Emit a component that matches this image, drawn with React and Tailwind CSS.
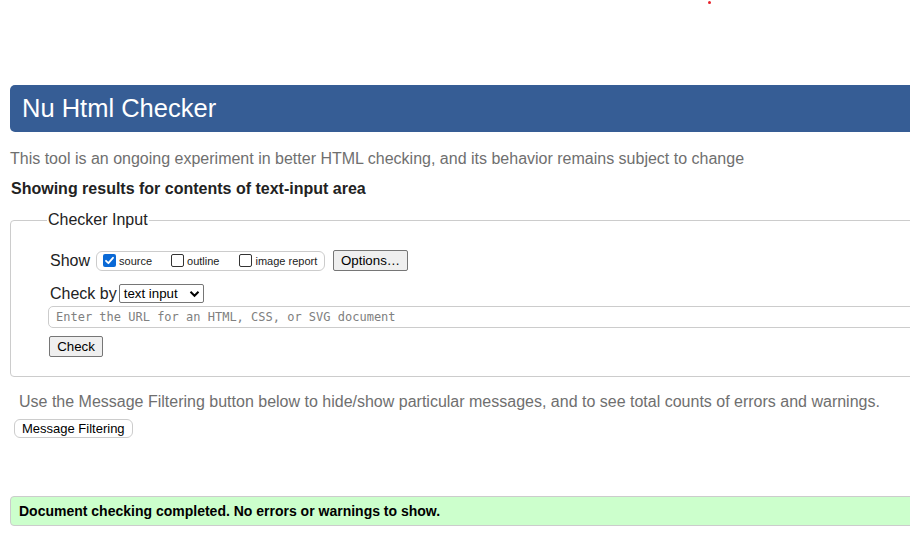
import React from "react";

export default function App() {
  return (
    <div className="relative w-[910px] h-[537px] overflow-hidden bg-white font-['Liberation_Sans',Arial,sans-serif] text-[#222]">
      <div className="absolute left-[708px] top-[1px] w-[3px] h-[3px] rounded-full bg-[#e8222a]" />
      <div className="w-[1000px] pl-[10px] pt-[85px]">
        <header className="h-[47px] rounded-l-[5px] bg-[#365d95] flex items-center pl-[12px]">
          <h1 className="text-white text-[25.5px] leading-none">Nu Html Checker</h1>
        </header>
        <p className="mt-[18px] text-[16px] leading-[18px] text-[#6f6f6f]">
          This tool is an ongoing experiment in better HTML checking, and its behavior remains subject to change
        </p>
        <p className="mt-[12px] ml-[1px] text-[16px] leading-[18px] font-bold text-[#222]">
          Showing results for contents of text-input area
        </p>
        <fieldset className="mt-[13px] border border-[#cccccc] rounded-[4px] pl-[36px] pb-[20px] h-[166px]">
          <legend className="px-[1px] text-[16px] leading-[18px] text-[#222]">Checker Input</legend>
          <div className="ml-[3px] mt-[21px] flex items-center">
            <span className="text-[16px] leading-[18px]">Show</span>
            <div className="ml-[6px] h-[20px] w-[229px] border border-[#cccccc] rounded-[6px] flex items-center pl-[6px] text-[11px]">
              <label className="flex items-center">
                <span className="w-[13px] h-[13px] rounded-[2px] bg-[#0a69d6] flex items-center justify-center">
                  <svg width="11" height="11" viewBox="0 0 11 11" fill="none">
                    <path d="M2 5.8 L4.4 8.2 L9 2.8" stroke="white" strokeWidth="1.8" strokeLinecap="round" strokeLinejoin="round" />
                  </svg>
                </span>
                <span className="ml-[3px] mt-[2px]">source</span>
              </label>
              <label className="flex items-center ml-[19px]">
                <span className="w-[13px] h-[13px] rounded-[2px] border border-[#333] bg-white" />
                <span className="ml-[3px] mt-[2px]">outline</span>
              </label>
              <label className="flex items-center ml-[20px]">
                <span className="w-[13px] h-[13px] rounded-[2px] border border-[#333] bg-white" />
                <span className="ml-[3px] mt-[2px]">image report</span>
              </label>
            </div>
            <button className="ml-[8px] h-[21px] w-[75px] border border-[#767676] rounded-[2px] bg-[#efefef] text-[13.3px] text-black flex items-center justify-center">
              Options…
            </button>
          </div>
          <div className="ml-[3px] mt-[13px] flex items-center">
            <span className="text-[16px] leading-[18px]">Check by</span>
            <div className="ml-[2px] h-[19px] w-[85px] border border-[#767676] rounded-[2px] bg-white flex items-center pl-[4px] pr-[3px] text-[13.3px] text-black">
              <span className="flex-1">text input</span>
              <svg width="11" height="8" viewBox="0 0 11 8">
                <path d="M1.5 1.8 L5.5 5.8 L9.5 1.8" stroke="black" strokeWidth="2" fill="none" />
              </svg>
            </div>
          </div>
          <div className="ml-[1px] mt-[3px] h-[22px] w-[900px] border border-[#cccccc] rounded-[5px] flex items-center pl-[7px] font-['DejaVu_Sans_Mono',monospace] text-[12px] text-[#808080]">
            Enter the URL for an HTML, CSS, or SVG document
          </div>
          <button className="ml-[2px] mt-[8px] h-[21px] w-[54px] border border-[#767676] rounded-[2px] bg-[#efefef] text-[13.3px] text-black flex items-center justify-center">
            Check
          </button>
        </fieldset>
        <p className="mt-[16px] ml-[9px] text-[16px] leading-[18px] text-[#6f6f6f]">
          Use the Message Filtering button below to hide/show particular messages, and to see total counts of errors and warnings.
        </p>
        <button className="mt-[8px] ml-[4px] h-[19px] px-[7px] border border-[#cccccc] rounded-[6px] bg-white text-[13px] text-black flex items-center">
          Message Filtering
        </button>
        <div className="mt-[58px] h-[30px] border border-[#cccccc] rounded-l-[4px] bg-[#ccffcc] flex items-center pl-[8px] text-[14px] font-bold text-black">
          Document checking completed. No errors or warnings to show.
        </div>
      </div>
    </div>
  );
}
